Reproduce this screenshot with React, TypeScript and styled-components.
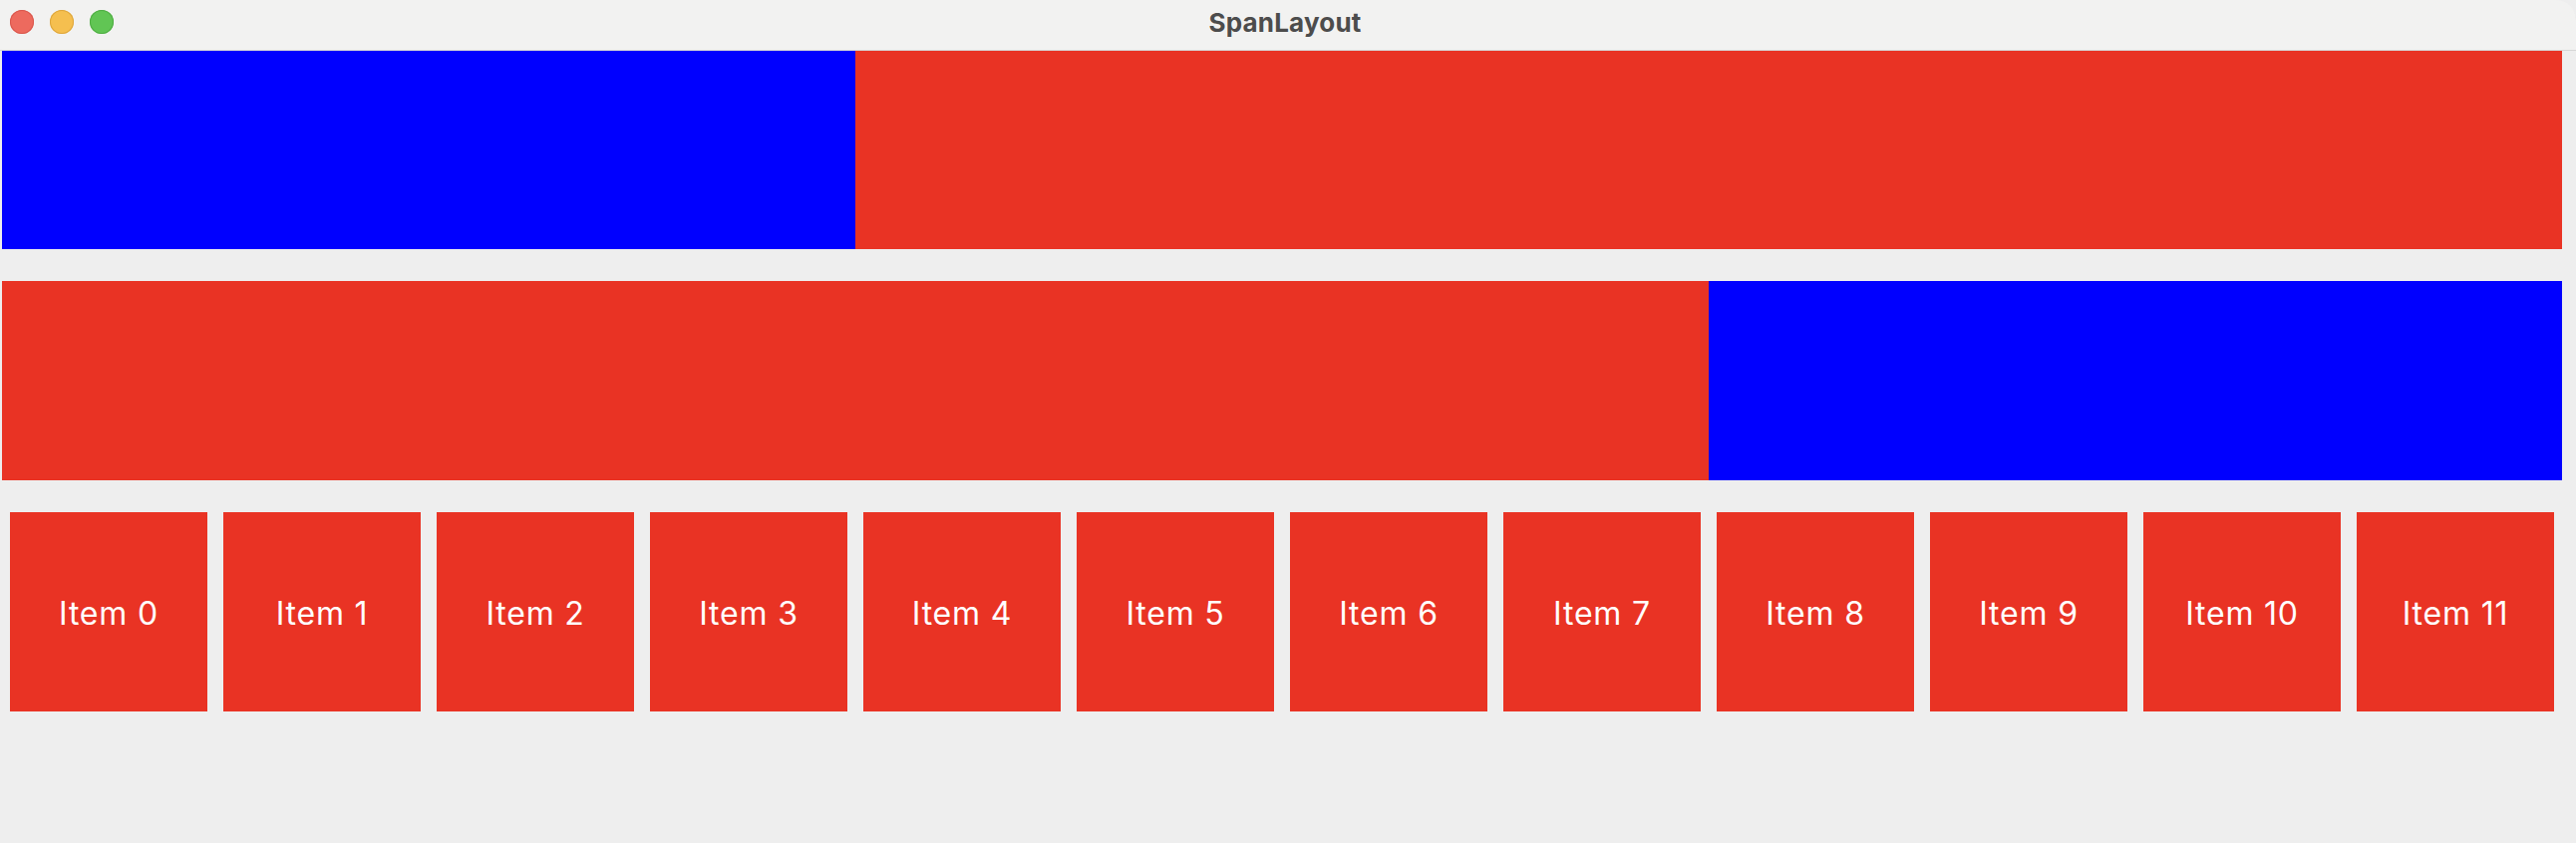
import React from "react";
import styled, { createGlobalStyle } from "styled-components";

const GlobalStyle = createGlobalStyle`
  html, body { margin: 0; padding: 0; background: #eeeeee; }
  body { font-family: Inter, "Open Sans", "Liberation Sans", sans-serif; }
`;

const Window = styled.div`
  width: 2584px;
  height: 846px;
  background: #eeeeee;
  display: flex;
  flex-direction: column;
  overflow: hidden;
`;

const TitleBar = styled.div`
  height: 50px;
  flex: 0 0 50px;
  background: #f2f2f1;
  border-top-right-radius: 20px;
  display: flex;
  align-items: center;
  justify-content: center;
  position: relative;
  box-shadow: 0 1px 0 #d6d6d6;
  z-index: 1;
`;

const Lights = styled.div`
  position: absolute;
  left: 10px;
  top: 10px;
  display: flex;
  gap: 16px;
`;

const Light = styled.span<{ $fill: string; $stroke: string }>`
  width: 24px;
  height: 24px;
  border-radius: 50%;
  background: ${(p) => p.$fill};
  box-shadow: inset 0 0 0 1px ${(p) => p.$stroke};
`;

const Title = styled.div`
  font-family: Inter, "Liberation Sans", sans-serif;
  font-weight: 700;
  font-size: 26px;
  color: #4c4c4c;
  margin-left: -6px;
  margin-top: -6px;
  letter-spacing: 0.2px;
`;

const Content = styled.div`
  display: flex;
  flex-direction: column;
  padding: 0 14px 0 2px;
`;

const SpanRow = styled.div`
  display: grid;
  grid-template-columns: repeat(3, 1fr);
  height: 200px;
  margin-bottom: 32px;
`;

const Cell = styled.div<{ $color: string; $span: number }>`
  background: ${(p) => p.$color};
  grid-column: span ${(p) => p.$span};
`;

const ItemsRow = styled.div`
  display: flex;
  gap: 16px;
  padding-left: 8px;
`;

const Item = styled.div`
  width: 198px;
  height: 200px;
  flex: 0 0 198px;
  background: #e93324;
  color: #ffffff;
  display: flex;
  align-items: center;
  justify-content: center;
  font-family: Inter, "Liberation Sans", sans-serif;
  font-size: 32px;
  letter-spacing: 0.8px;
  padding-top: 2px;
  box-sizing: border-box;
`;

const RED = "#e93324";
const BLUE = "#0000ff";

export default function App() {
  return (
    <Window>
      <GlobalStyle />
      <TitleBar>
        <Lights>
          <Light $fill="#ed6a5e" $stroke="#d9574c" />
          <Light $fill="#f5bf4f" $stroke="#dea63b" />
          <Light $fill="#61c554" $stroke="#4fad43" />
        </Lights>
        <Title>SpanLayout</Title>
      </TitleBar>
      <Content>
        <SpanRow>
          <Cell $color={BLUE} $span={1} />
          <Cell $color={RED} $span={2} />
        </SpanRow>
        <SpanRow>
          <Cell $color={RED} $span={2} />
          <Cell $color={BLUE} $span={1} />
        </SpanRow>
        <ItemsRow>
          {Array.from({ length: 12 }, (_, i) => (
            <Item key={i}>Item {i}</Item>
          ))}
        </ItemsRow>
      </Content>
    </Window>
  );
}
